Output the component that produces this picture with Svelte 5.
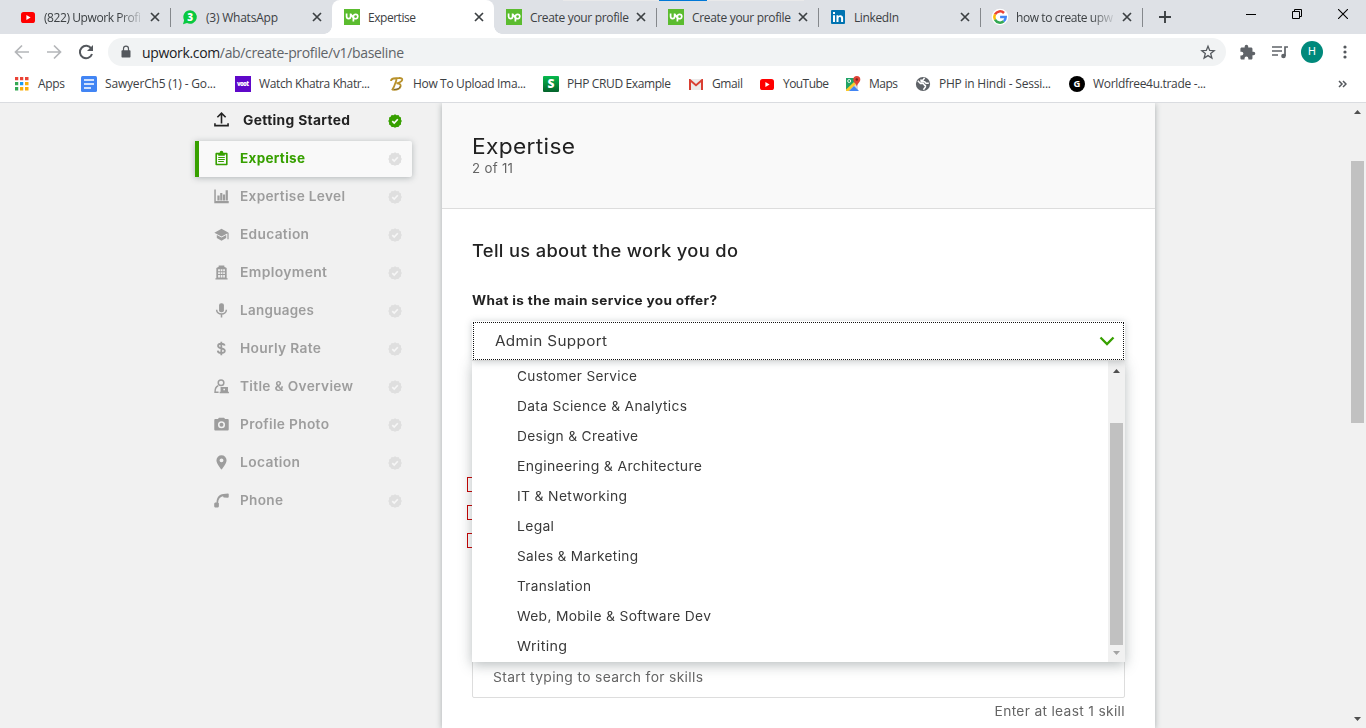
<script>
  // Spreads a label's letters so the line takes the given width.
  function fit(node, width) {
    const natural = node.getBoundingClientRect().width;
    const gaps = Math.max(1, node.textContent.length - 1);
    const space = (width - natural) / gaps;
    node.style.letterSpacing = space + 'px';
    node.style.marginRight = -space + 'px';
  }

  // Widens the letterforms themselves, over a light tracking.
  function wide(node, width) {
    node.style.letterSpacing = '0.3px';
    const natural = node.getBoundingClientRect().width - 0.3;
    node.style.transform = `scaleX(${width / natural})`;
  }

  const tabs = [
    { icon: 'youtube', text: '(822) Upwork Profi', w: 97, fade: true },
    { icon: 'whatsapp', text: '(3) WhatsApp', w: 72 },
    { icon: 'upwork', text: 'Expertise', w: 48, active: true },
    { icon: 'upwork', text: 'Create your profile', w: 99 },
    { icon: 'upwork', text: 'Create your profile', w: 99 },
    { icon: 'linkedin', text: 'LinkedIn', w: 45 },
    { icon: 'google', text: 'how to create upw', w: 97, fade: true }
  ];
  const bookmarks = [
    { icon: 'apps', text: 'Apps', w: 27, box: 67 },
    { icon: 'docs', text: 'SawyerCh5 (1) - Go...', w: 111, box: 154 },
    { icon: 'voot', text: 'Watch Khatra Khatr...', w: 111, box: 154 },
    { icon: 'script', text: 'How To Upload Ima...', w: 113, box: 154 },
    { icon: 'sgreen', text: 'PHP CRUD Example', w: 104, box: 145 },
    { icon: 'gmail', text: 'Gmail', w: 31, box: 71 },
    { icon: 'youtube', text: 'YouTube', w: 46, box: 86 },
    { icon: 'maps', text: 'Maps', w: 29, box: 70 },
    { icon: 'globe', text: 'PHP in Hindi - Sessi...', w: 112, box: 154 },
    { icon: 'gblack', text: 'Worldfree4u.trade -...', w: 113, box: 150 }
  ];
  const steps = [
    { icon: 'upload', text: 'Getting Started', w: 107, state: 'done' },
    { icon: 'clipboard', text: 'Expertise', w: 65, state: 'active' },
    { icon: 'chart', text: 'Expertise Level', w: 105 },
    { icon: 'cap', text: 'Education', w: 69 },
    { icon: 'building', text: 'Employment', w: 87 },
    { icon: 'mic', text: 'Languages', w: 74 },
    { icon: 'dollar', text: 'Hourly Rate', w: 81 },
    { icon: 'person', text: 'Title & Overview', w: 113 },
    { icon: 'camera', text: 'Profile Photo', w: 89 },
    { icon: 'pin', text: 'Location', w: 60 },
    { icon: 'phone', text: 'Phone', w: 43 }
  ];
  const options = [
    ['Customer Service', 120],
    ['Data Science & Analytics', 170],
    ['Design & Creative', 121],
    ['Engineering & Architecture', 185],
    ['IT & Networking', 110],
    ['Legal', 37],
    ['Sales & Marketing', 121],
    ['Translation', 74],
    ['Web, Mobile & Software Dev', 194],
    ['Writing', 50]
  ];
</script>

{#snippet brand(name)}
  <svg class="brand" viewBox="0 0 16 16">
    {#if name === 'youtube'}
      <rect x="1" y="3" width="14" height="11" rx="2.6" fill="#f00" /><path d="M6.4 6v5l4.2-2.5z" fill="#fff" />
    {:else if name === 'whatsapp'}
      <path d="M8.2 1.2a6.8 6.8 0 1 1-3.2 12.9L1 15.2l1.1-4A6.8 6.8 0 0 1 8.2 1.2z" fill="#09c940" />
      <text x="8.2" y="12" text-anchor="middle" font-size="10" font-weight="800" fill="#fff">3</text>
    {:else if name === 'upwork'}
      <path d="M0 0h16v16H0z" fill="#5bbc2f" />
      <path d="M2.6 4.600v3c0 2.700 4 2.700 4 0v-3M9.400 12.500V7.600c0-3.100 4.400-2.800 4.400-.1 0 2.400-2.700 3-4.600 1.200L7 5.600" fill="none" stroke="#fff" stroke-width="1.700" />
    {:else if name === 'linkedin'}
      <rect x="1" y="1" width="14" height="14" rx="1" fill="#0073b1" />
      <path d="M3 6.3h2V13H3zM3 3.1h2v2H3zM6.5 6.3h1.9v1c1-1.7 4.7-1.6 4.7 1.6V13h-2V9.5c0-2-2.6-2-2.6 0V13h-2z" fill="#fff" />
    {:else if name === 'google'}
      <circle cx="8" cy="8" r="8.3" fill="#fff" />
      <g fill="none" stroke-width="2.5"><path d="M3 5.3A5.7 5.7 0 0 1 12 4" stroke="#ea4335" /><path d="M3 5.3a5.7 5.7 0 0 0 0 5.4" stroke="#fbbc05" /><path d="M3 10.7a5.7 5.7 0 0 0 8.7 1.6" stroke="#34a853" /><path d="M8.1 8h5.6c0 2-.7 3.3-2 4.3" stroke="#4285f4" /></g>
    {:else if name === 'apps'}
      <g transform="translate(-.5 -.5)"><path d="M1.500 1.500h3.500v3.500H1.500zM6.500 1.500h3.500v3.500h-3.500zM11.500 1.500h3.500v3.500h-3.500z" fill="#ea4335" /><path d="M1.500 6.500h3.500v3.500H1.500zM1.500 11.500h3.500v3.500H1.500z" fill="#34a853" /><path d="M6.500 6.500h3.500v3.500h-3.500z" fill="#1a9bf0" /><path d="M11.500 6.500h3.500v3.500h-3.500zM6.500 11.500h3.500v3.500h-3.500zM11.500 11.500h3.500v3.500h-3.500z" fill="#f9ae08" /><path d="M5 0v16M10 0v16M0 5h16M0 10h16" stroke="#fff" stroke-width="1.200" transform="translate(.6 .6)" /></g>
    {:else if name === 'docs'}
      <rect width="16" height="16" rx="1.5" fill="#4285f4" /><path d="M3 4h10M3 8h10M3 12h7" stroke="#fff" stroke-width="1.7" />
    {:else if name === 'voot'}
      <path d="M0 0h16v16H0z" fill="#5f08c9" /><text x="2" y="10" font-size="6" font-weight="800" fill="#fff" textLength="12">voot</text>
    {:else if name === 'script'}
      <path d="M2 5c0-3 4-3 8-3 5-.2 4.4 4-2.5 5.3C14 7 13 14 4.2 13.8M7.6 3.3C6.4 7 5.5 10.6 3 14.300" fill="none" stroke="#b8912b" stroke-width="1.800" />
      <path d="M5 13.3c4 .3 6-1.7 6-3" fill="none" stroke="#454238" stroke-width=".7" />
    {:else if name === 'sgreen'}
      <defs><linearGradient id="sg" x2="1" y2="1" x1="1" y1="0"><stop stop-color="#06b94d" /><stop offset="1" stop-color="#04632b" /></linearGradient></defs>
      <rect width="16" height="16" rx="1" fill="url(#sg)" /><text x="8" y="12.200" text-anchor="middle" font-size="12" font-weight="800" fill="#fff">S</text>
    {:else if name === 'gmail'}
      <path d="M1 3h14v11H1z" fill="#eceaea" /><path d="M1 14V3h1.200L8 8l5.800-5H15v11h-2V6.300L8 10.500 3 6.300V14z" fill="#d93f32" />
    {:else if name === 'maps'}
      <path d="M1 2h12v13H1z" fill="#20a366" /><path d="M1 15 13 4v11z" fill="#d5d8dc" /><path d="M1 13.5 9 6l2 2-7 7H1z" fill="#fcca2d" /><path d="m9 10 5 5H4z" fill="#4285f4" /><circle cx="4.2" cy="5" r="1.5" fill="none" stroke="#e9f7ef" /><path d="M11.8 0a3.5 3.5 0 0 1 3.5 3.5c0 2.6-2.600 3.600-3.500 7-.9-3.400-3.500-4.400-3.500-7A3.500 3.500 0 0 1 11.800 0z" fill="#df4336" /><circle cx="11.8" cy="3.5" r="1.2" fill="#7f231c" />
    {:else if name === 'globe'}
      <circle cx="8" cy="8" r="7.100" fill="#5f6368" /><path d="M2.800 4.800 5.500 7.500h2.300c1.500 0 .8 2 2.600 2v1.500l-2 2.700M9.500 1.800 8 4.200h-2l.3 1.600h3.400l1.300 1.400h2.800" fill="none" stroke="#fff" stroke-width="1.500" />
    {:else}
      <circle cx="8" cy="8" r="8" fill="#000" /><text x="8" y="11.400" text-anchor="middle" font-size="9.500" font-weight="700" fill="#fff">G</text>
    {/if}
  </svg>
{/snippet}

{#snippet glyph(name)}
  <svg class="glyph" viewBox="0 0 16 16" fill="currentColor">
    {#if name === 'upload'}
      <path d="M8 12.200V1.500M3.600 5.600 8 1.200l4.400 4.400M1 12v2.500h14V12" fill="none" stroke="currentColor" stroke-width="1.700" />
    {:else if name === 'clipboard'}
      <path fill-rule="evenodd" d="M2.600 1.800H6a2 2 0 0 1 4 0h3.400c.6 0 1.100.5 1.100 1.100v11.200c0 .6-.5 1.100-1.100 1.100H2.600c-.6 0-1.100-.5-1.100-1.100V2.900c0-.6.5-1.100 1.100-1.100zM3.200 3.800v9.800h9.600V3.800h-1.300v1.300h-7V3.800z" /><path d="M4.500 6.300h7v1.100h-7zM4.500 8.500h7v1.100h-7zM4.500 10.700h6v1.100h-6z" />
    {:else if name === 'chart'}
      <path d="M.3.600h1.600v12.200h13.800V15.200H.3zM3.600 6.800h2.400v5.400H3.600zM6.600 4.300h2.300v7.900H6.600zM9.500 5.800h2.300v6.400H9.500zM12.400 1.300h2.400v10.900h-2.400z" />
    {:else if name === 'cap'}
      <path d="M.4 6 8 1.800 15.600 6 8 10.200zM3 8.500l5 2.700 5-2.700v3.200L8 14.600l-5-2.900zM14.300 6.500h1.300v6.500h-1.300z" />
    {:else if name === 'building'}
      <path fill-rule="evenodd" d="M5 .5h6v1.300l2.500 1.500v10.800h1v1.400h-13v-1.400h1V3.300L5 1.800zM4.400 4.500v2.100h1.900V4.500zm2.700 0v2.100h1.900V4.500zm2.700 0v2.100h1.800V4.500zM4.400 7.600v2h1.900v-2zm2.700 0v2h1.900v-2zm2.700 0v2h1.800v-2zM4.400 10.600v2.600h1.900v-2.600zm2.700 0v2.600h1.900v-2.600zm2.700 0v2.600h1.800v-2.600z" />
    {:else if name === 'mic'}
      <rect x="5.400" y=".3" width="5.200" height="9.600" rx="2.200" /><path d="M2.800 7.300c0 6 10.400 6 10.400 0M8 11.600v3.800" fill="none" stroke="currentColor" stroke-width="1.600" />
    {:else if name === 'dollar'}
      <path d="M11.300 5c-.4-2.800-7-2.800-7 .2 0 3.300 7.300 1.900 7.300 5.200 0 3.200-7.300 3.200-7.600-.2M7.800.8v14.400" fill="none" stroke="currentColor" stroke-width="1.900" />
    {:else if name === 'person'}
      <circle cx="7.500" cy="4" r="3" fill="none" stroke="currentColor" stroke-width="1.600" /><path d="M4.500 7.200C1.600 8.200 1 10 1.100 14h3.800" fill="none" stroke="currentColor" stroke-width="1.600" /><path fill-rule="evenodd" d="M7 8.600h7.900v5h1v1.600H6v-1.600h1zm3 1.900v1.600h1.700v-1.600z" />
    {:else if name === 'camera'}
      <path fill-rule="evenodd" d="M4.200 2.200 5.300.8h5.400l1.100 1.400h2.900c.6 0 1 .4 1 1v10.200c0 .6-.4 1-1 1H1.300c-.6 0-1-.4-1-1V3.200c0-.6.4-1 1-1zM8 4.400a3.800 3.800 0 1 0 0 7.600 3.800 3.800 0 0 0 0-7.600z" /><circle cx="8" cy="8.200" r="2.100" />
    {:else if name === 'pin'}
      <path fill-rule="evenodd" d="M8 .3a5.400 5.400 0 0 1 5.400 5.400C13.400 9.500 8 15.700 8 15.700S2.600 9.500 2.600 5.700A5.400 5.400 0 0 1 8 .3zm0 3.300a2.100 2.100 0 1 0 0 4.200 2.100 2.100 0 0 0 0-4.200z" />
    {:else}
      <path d="M1.200 10.200h1.500C2.700 5.200 5.500 1.400 10 1.100L15 .4l.7.700v3.200l-.7.800-4.700-.2-.7-1.400C6.500 4.200 4.600 6.500 4.400 10.200l.8.600v3.700l-.8.900H1l-.8-.9v-3.400z" />
    {/if}
  </svg>
{/snippet}

<div class="window">
  <header>
    <div class="strip">
      {#each tabs as tab, i}
        <div class="tab" class:active={tab.active} class:divided={i !== 1 && i !== 2}>
          {@render brand(tab.icon)}
          <div class="tabtext" class:fade={tab.fade}><span class="fit" use:fit={tab.w}>{tab.text}</span></div>
          <svg class="close" viewBox="0 0 10 10"><path d="m1 1 8 8M9 1 1 9" stroke="#3c4043" stroke-width="1.700" /></svg>
        </div>
      {/each}
      <svg class="plus" viewBox="0 0 12 12"><path d="M6 0v12M0 6h12" stroke="#3c4043" stroke-width="1.900" /></svg>
      <div class="controls">
        <svg width="10" height="10"><path d="M0 5.500h10" stroke="#000" /></svg>
        <svg width="10" height="10" fill="none" stroke="#000"><path d="M.5 2.500h7v7h-7zM2.500 2.500v-2h7v7h-2" /></svg>
        <svg width="10" height="10"><path d="m0 0 10 10M10 0 0 10" stroke="#000" stroke-width="1.100" /></svg>
      </div>
      <div class="loading"></div>
    </div>

    <div class="toolbar">
      <svg class="nav" viewBox="0 0 16 16"><path d="M15 8H2M8 1.500 1.500 8 8 14.500" fill="none" stroke="#b4b6b9" stroke-width="1.700" /></svg>
      <svg class="nav" viewBox="0 0 16 16"><path d="M1 8h13M8 1.500 14.500 8 8 14.500" fill="none" stroke="#b4b6b9" stroke-width="1.700" /></svg>
      <svg class="nav" viewBox="0 0 16 16"><path d="M13.300 4.600A6.200 6.200 0 1 0 14 10" fill="none" stroke="#54585d" stroke-width="2" /><path d="M15 1v6H9z" fill="#54585d" /></svg>
      <div class="omnibox">
        <svg width="10" height="14" viewBox="0 0 10 14"><path d="M1.500 5.200h7c.6 0 1 .4 1 1v5.300c0 .6-.4 1-1 1h-7c-.6 0-1-.4-1-1V6.200c0-.6.4-1 1-1z" fill="#54585d" /><path d="M2.500 6V3.700c0-3.400 5-3.400 5 0V6" fill="none" stroke="#54585d" stroke-width="1.200" /></svg>
        <div class="url"><span class="fit" use:fit={262}>upwork.com<i>/ab/create-profile/v1/baseline</i></span></div>
        <svg class="star" viewBox="0 0 16 16"><path d="m8 2.200 1.700 4.200 4.500.3-3.500 2.900 1.200 4.400L8 11.600 4.100 14l1.200-4.400-3.500-2.900 4.500-.3z" fill="none" stroke="#54585d" stroke-width="1.300" /></svg>
      </div>
      <svg class="puzzle" viewBox="0 0 24 24"><path fill="#5f6368" d="M20.500 11H19V7c0-1.100-.9-2-2-2h-4V3.500a2.500 2.500 0 0 0-5 0V5H4c-1.100 0-2 .9-2 2v3.800h1.500a2.700 2.700 0 0 1 0 5.400H2V20c0 1.100.9 2 2 2h3.800v-1.500a2.700 2.700 0 0 1 5.400 0V22H17c1.100 0 2-.9 2-2v-4h1.500a2.500 2.500 0 0 0 0-5z" /></svg>
      <svg class="queue" viewBox="0 0 16 14"><path d="M0 2h10M0 6h10M0 10h6M13 11V2h3" fill="none" stroke="#5f6368" stroke-width="1.700" /><circle cx="11.500" cy="11" r="2.300" fill="#5f6368" /></svg>
      <div class="avatar">H</div>
      <svg class="dots" width="4" height="16" fill="#54585d"><circle cx="2" cy="3" r="1.600" /><circle cx="2" cy="8" r="1.600" /><circle cx="2" cy="13" r="1.600" /></svg>
    </div>

    <div class="bookmarks">
      {#each bookmarks as b}
        <div class="bookmark" style="width: {b.box}px">
          {@render brand(b.icon)}
          <span class="fit" use:fit={b.w}>{b.text}</span>
        </div>
      {/each}
      <svg class="more" width="9" height="8"><path d="m1 1 3 3-3 3M5 1l3 3-3 3" fill="none" stroke="#54585d" stroke-width="1.500" /></svg>
    </div>
  </header>

  <div class="page">
    <nav>
      {#each steps as step}
        <div class="step {step.state ?? 'pending'}">
          {@render glyph(step.icon)}
          <span class="fit" use:wide={step.w}>{step.text}</span>
          <svg class="badge" viewBox="0 0 16 16">
            <path fill="currentColor" d="m8 .3 1.900 1 2.100-.1 1.100 1.800 1.800 1.100-.1 2.100 1 1.800-1 1.900.1 2.100-1.800 1.100-1.100 1.800-2.100-.1-1.900 1-1.800-1-2.100.1L3 13.100 1.200 12l.1-2.100-1-1.900 1-1.800-.1-2.100L3 3l1.100-1.800 2.100.1z" />
            <path class="tick" d="m4.900 8.200 2.200 2.100 4.100-4.300" fill="none" stroke-width="1.900" />
          </svg>
        </div>
      {/each}
    </nav>

    <main>
      <div class="head">
        <h1><span class="fit" use:wide={103}>Expertise</span></h1>
        <p><span class="fit" use:wide={41}>2 of 11</span></p>
      </div>
      <section>
        <h2><span class="fit" use:wide={266}>Tell us about the work you do</span></h2>
        <h3><span class="fit" use:wide={245}>What is the main service you offer?</span></h3>
        <div class="select">
          <div class="value">
            <span class="fit" use:wide={112}>Admin Support</span>
            <svg width="16" height="10"><path d="m1.500 1.500 6.500 6.500 6.500-6.500" fill="none" stroke="#37a000" stroke-width="2.300" /></svg>
          </div>
          <div class="menu">
            <ul>
              {#each options as [name, w]}
                <li><span class="fit" use:wide={w}>{name}</span></li>
              {/each}
            </ul>
            <div class="bar inner">
              <svg width="7" height="4"><path d="M0 4h7L3.500 0z" fill="#505050" /></svg>
              <div class="thumb"></div>
              <svg width="7" height="4"><path d="M0 0h7L3.500 4z" fill="#a3a3a3" /></svg>
            </div>
          </div>
        </div>
        <div class="checks"><i></i><i></i><i></i></div>
        <div class="search"><span class="fit" use:wide={210}>Start typing to search for skills</span></div>
        <p class="hint"><span class="fit" use:wide={130}>Enter at least 1 skill</span></p>
      </section>
    </main>

    <div class="bar outer">
      <svg width="7" height="4"><path d="M0 4h7L3.500 0z" fill="#505050" /></svg>
      <div class="thumb"></div>
      <svg width="7" height="4"><path d="M0 0h7L3.500 4z" fill="#505050" /></svg>
    </div>
  </div>
</div>

<style>
  :global(body) { margin: 0; overflow: hidden; }
  * { box-sizing: border-box; }
  svg { display: block; flex: none; }
  h1, h2, h3, p, ul { margin: 0; padding: 0; font-weight: 400; }
  .fit { display: inline-block; white-space: nowrap; transform-origin: 0 50%; }
  .window { width: 1366px; height: 728px; display: flex; flex-direction: column; overflow: hidden; background: #fff; font-family: Inter, sans-serif; }
  header { height: 102px; font: 12px "Open Sans", "Noto Sans", sans-serif; color: #3c4043; }
  .brand { width: 16px; height: 16px; overflow: visible; }

  .strip { position: relative; height: 34px; padding-left: 8px; display: flex; background: #dee1e6; }
  .tab { position: relative; width: 162px; height: 34px; padding: 0 10px 0 12px; display: flex; align-items: center; }
  .tab.divided::after { content: ''; position: absolute; right: -1px; top: 8px; width: 1px; height: 19px; background: #85888c; }
  .tab.active { background: #fff; border-radius: 8px 8px 0 0; }
  .tab.active::before, .tab.active::after { content: ''; position: absolute; bottom: 0; width: 8px; height: 8px; }
  .tab.active::before { left: -8px; background: radial-gradient(circle at 0 0, #dee1e6 7.500px, #fff 8px); }
  .tab.active::after { right: -8px; background: radial-gradient(circle at 100% 0, #dee1e6 7.500px, #fff 8px); }
  .tabtext { width: 101px; margin-left: 8px; }
  .tabtext.fade { -webkit-mask-image: linear-gradient(90deg, #000 74%, transparent); mask-image: linear-gradient(90deg, #000 74%, transparent); }
  .close { width: 10px; height: 10px; margin-left: 5px; }
  .plus { width: 12px; height: 12px; margin: 11px 0 0 17px; }
  .controls { margin: 9px 18px 0 auto; display: flex; gap: 36px; }
  .loading { position: absolute; left: 563px; top: 0; width: 241px; height: 1px; background: linear-gradient(90deg, #e9e9ea 96px, #0078d7 96px 144px, #e9e9ea 144px); }

  .toolbar { height: 36px; display: flex; align-items: center; padding-left: 14px; }
  .nav { width: 16px; height: 16px; margin-right: 16px; }
  .omnibox { width: 1118px; height: 28px; margin-left: -2px; padding: 0 10px 0 13px; border-radius: 14px; background: #f1f3f4; display: flex; align-items: center; font-size: 14px; }
  .url { margin-left: 11px; color: #202124; }
  .url i { font-style: normal; color: #5f6368; }
  .star { width: 16px; height: 16px; margin-left: auto; }
  .puzzle { width: 17px; height: 17px; margin-left: 13px; }
  .queue { width: 16px; height: 14px; margin-left: 16px; }
  .avatar { width: 22px; height: 22px; margin-left: 13px; border-radius: 50%; background: #00897b; color: #fff; font: 11px/22px Roboto, sans-serif; text-align: center; }
  .dots { margin-left: 20px; }

  .bookmarks { height: 32px; padding: 0 19px 4px 14px; display: flex; align-items: center; }
  .bookmark { display: flex; align-items: center; gap: 8px; flex: none; }
  .bookmark .fit { margin-top: -2px; }
  .more { margin-left: auto; }

  .page { position: relative; flex: 1; border-top: 1px solid #dadce0; display: flex; background: #f1f1f1; overflow: hidden; }
  nav { width: 217px; margin: -1px 0 0 195px; }
  .step { height: 38px; padding: 0 10px 2px 19px; display: flex; align-items: center; font-size: 13px; font-weight: 600; color: #9d9d9d; }
  .step .fit { margin-left: 11px; }
  .glyph { width: 15px; height: 15px; overflow: visible; }
  .badge { width: 14px; height: 14px; margin: 2px 0 0 auto; color: #dfdfdf; }
  .tick { stroke: #f6f6f6; }
  .step.done { color: #222; font-weight: 700; padding-bottom: 3px; }
  .step.done .fit { margin-left: 14px; }
  .step.done .badge { color: #37a000; }
  .step.done .tick { stroke: #fff; }
  .step.active { height: 36px; margin: 1px 0; padding: 0 10px 2px 15px; border-left: 4px solid #37a000; border-radius: 0 2px 2px 0; color: #37a000; font-weight: 700; background: #f9f9f9; box-shadow: 0 1px 6px rgba(57, 73, 76, .35); }

  main { width: 713px; margin-left: 30px; background: #fff; box-shadow: 0 1px 6px rgba(57, 73, 76, .4); }
  .head { height: 106px; padding: 30px 30px 0; background: #f9f9f9; border-bottom: 1px solid #ddd; }
  h1 { font-size: 21px; line-height: 28px; color: #222; }
  .head p { font-size: 13px; line-height: 14px; color: #656565; }
  section { padding: 27px 30px 0; }
  h2 { font-size: 17px; line-height: 30px; color: #222; font-weight: 500; }
  h3 { margin-top: 20px; font-size: 12.500px; line-height: 30px; color: #222; font-weight: 700; }
  .select { position: relative; height: 40px; margin-top: 5px; }
  .value { position: relative; z-index: 2; height: 40px; padding: 0 10px 0 23px; display: flex; align-items: center; justify-content: space-between; background: #fff; box-shadow: 0 1px 7px rgba(57, 73, 76, .28); border-bottom: 1px solid #d5d5d5; font-size: 14px; color: #393939; }
  .value::after { content: ''; position: absolute; inset: 1px 1px 0 1px; border: 1px dotted #111; }
  .menu { position: absolute; z-index: 1; left: 0; top: 40px; width: 653px; height: 301px; display: flex; background: #fff; box-shadow: 0 3px 12px rgba(57, 73, 76, .36); }
  ul { flex: 1; padding: 0 0 0 45px; list-style: none; }
  li { height: 30px; font-size: 13px; line-height: 31px; color: #393939; }
  .bar { width: 17px; display: flex; flex-direction: column; align-items: center; background: #f1f1f1; }
  .thumb { width: 13px; background: #c1c1c1; }
  .inner { padding-top: 8px; }
  .inner .thumb { height: 222px; margin: 50px 0 6px; }
  .outer { margin-left: auto; padding-top: 7px; }
  .outer .thumb { height: 262px; margin: 47px 0 294px; }
  .checks { height: 71px; margin: 116px 0 0 -5px; display: flex; flex-direction: column; gap: 13px; }
  .checks i { width: 15px; height: 15px; border: 1px solid #c80000; }
  .search { height: 42px; margin-top: 108px; padding-left: 20px; border: 1px solid #ddd; border-radius: 2px; font-size: 13px; line-height: 40px; color: #656565; }
  .hint { height: 20px; margin-top: 3px; font-size: 13px; line-height: 21px; color: #656565; text-align: right; }
  .hint .fit { transform-origin: 100% 50%; }
</style>
